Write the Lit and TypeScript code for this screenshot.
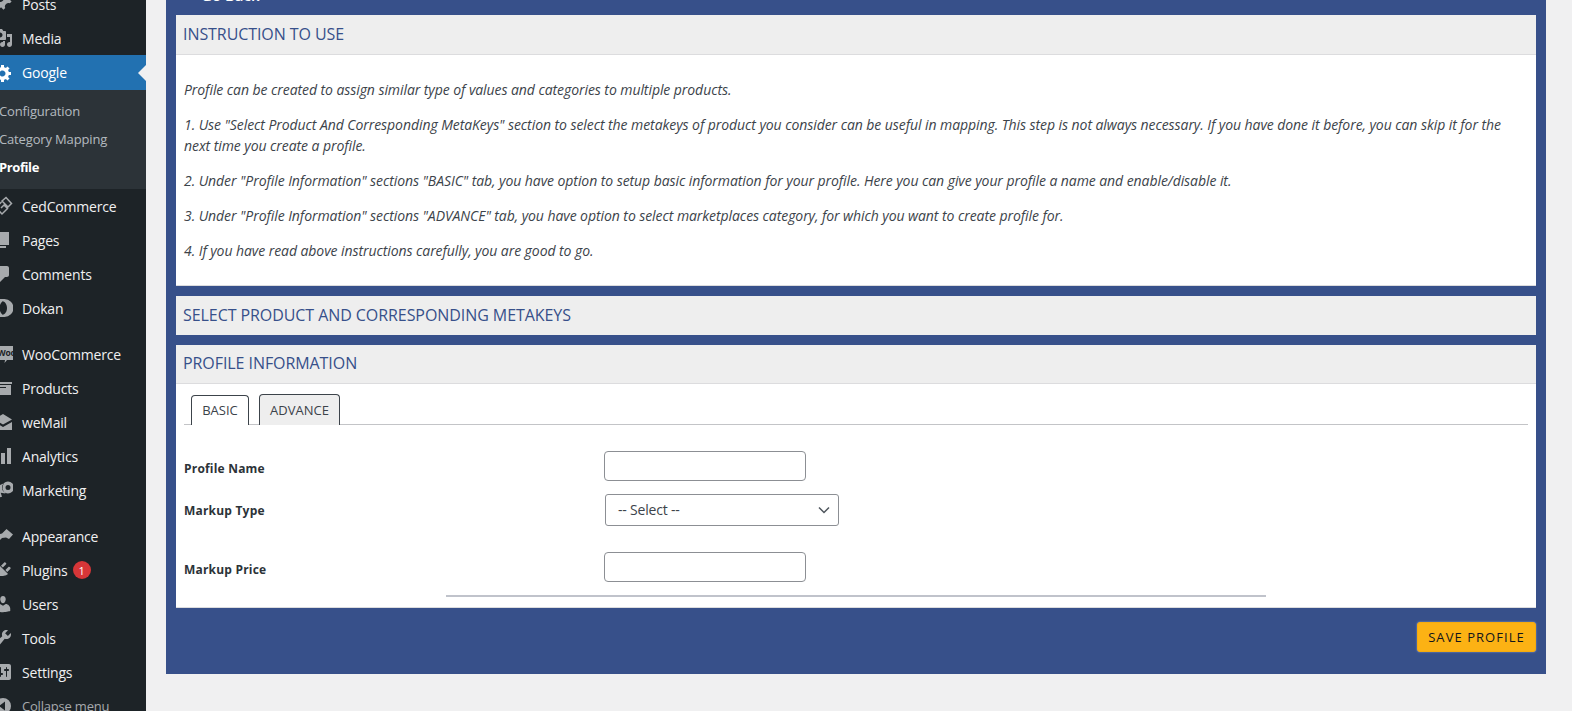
import { LitElement, html, css, svg } from "lit";
import { customElement } from "lit/decorators.js";

const icons: Record<string, any> = {
  posts: svg`<path d="M10.44 3.02l1.82-1.82 6.36 6.35-1.83 1.82c-1.05-.68-2.48-.57-3.41.36l-.75.75c-.92.93-1.04 2.35-.35 3.41l-1.83 1.82-2.41-2.41-2.8 2.79c-.42.42-3.38 2.71-3.8 2.29s1.86-3.39 2.28-3.81l2.79-2.79L4.1 9.36l1.83-1.82c1.05.69 2.48.57 3.4-.36l.75-.75c.93-.92 1.05-2.35.36-3.41z"/>`,
  media: svg`<path d="M13 11V4c0-.55-.45-1-1-1h-1.67L9 1H5L3.67 3H2c-.55 0-1 .45-1 1v7c0 .55.45 1 1 1h10c.55 0 1-.45 1-1zM7 4.5c1.38 0 2.5 1.12 2.5 2.5S8.38 9.5 7 9.5 4.5 8.38 4.5 7 5.62 4.5 7 4.5zM14 6h5v10.5c0 1.38-1.12 2.5-2.5 2.5S14 17.88 14 16.5s1.12-2.5 2.5-2.5c.17 0 .34.02.5.05V9h-3V6zm-4 8.05V13h2v3.5c0 1.38-1.12 2.5-2.5 2.5S7 17.88 7 16.5 8.12 14 9.5 14c.17 0 .34.02.5.05z"/>`,
  gear: svg`<path d="M18 12h-2.18c-.17.7-.44 1.35-.81 1.93l1.54 1.54-2.1 2.1-1.54-1.54c-.58.36-1.23.63-1.91.79V19H8v-2.18c-.68-.16-1.33-.43-1.91-.79l-1.54 1.54-2.12-2.12 1.54-1.54c-.36-.58-.63-1.23-.79-1.91H1V9.03h2.17c.16-.7.44-1.36.8-1.94L2.43 5.55l2.1-2.1 1.54 1.54c.58-.37 1.24-.64 1.93-.81V2h3v2.18c.68.16 1.33.43 1.91.79l1.54-1.54 2.12 2.12-1.54 1.54c.36.59.64 1.24.8 1.94H18V12zm-8.5 1.5c1.66 0 3-1.34 3-3s-1.34-3-3-3-3 1.34-3 3 1.34 3 3 3z"/>`,
  ced: svg`<path fill="none" stroke="currentColor" stroke-width="1.5" d="M13 1.500 18.500 7.500 15 11 9 5zM8.500 6 3 11.500 9 18 14.500 12.500 11 9 8 12"/>`,
  pages: svg`<path d="M6 15V2h10v13H6zm-1 1h8v2H3V5h2v11z"/>`,
  comments: svg`<path d="M5 2h9c1.1 0 2 .9 2 2v7c0 1.1-.9 2-2 2h-2l-5 5v-5H5c-1.100 0-2-.9-2-2V4c0-1.100.9-2 2-2z"/>`,
  dokan: svg`<path d="M3 1h8.500a9 9 0 0 1 0 18H3v-1.600c1 0 1.500-.4 1.500-1.400V4c0-1-.5-1.400-1.500-1.400zM9.500 3.200C7.500 5 6.500 7.500 6.500 10s1 5 3 6.800c3-.6 4.500-3.600 4.500-6.800s-1.500-6.200-4.500-6.800z"/>`,
  woo: svg`<path d="M3 2h17a2 2 0 0 1 2 2v10a2 2 0 0 1-2 2h-6l-2.500 3 .5-3H3a2 2 0 0 1-2-2V4a2 2 0 0 1 2-2z"/><text x="4.500" y="12" font-size="8.500" font-weight="700" fill="#1d2327" font-family="Open Sans, sans-serif">Woo</text>`,
  products: svg`<path d="M19 4v2H1V4h18zM2 7h16v10H2V7zm11 3V9H7v1h6z"/>`,
  wemail: svg`<path d="M10 2l9 5.500-9 5-9-5zM1 10l9 5 9-5v8H1z"/>`,
  analytics: svg`<path d="M18 18V2h-4v16h4zm-6 0V7H8v11h4zm-6 0v-8H2v8h4z"/>`,
  marketing: svg`<path d="M15 1.500a6 6 0 1 1-.1 12 6 6 0 0 1 .1-12zM15 5a2.500 2.500 0 1 0 0 5 2.500 2.500 0 0 0 0-5zM11 3.200 1.500 7.500V11l2.500.8 1.500 6 3.500-1-1.300-4 4.800.8A7.600 7.600 0 0 1 11 3.200z"/>`,
  appearance: svg`<path d="M13.500 3 20 8.500 16 13l-3-1.500-4 .5-4.500 4.500L2 15l3.500-4.500L4 9l5-1.500z"/>`,
  plugins: svg`<path d="M13.11 4.36L9.87 7.6 8 5.73l3.24-3.24c.35-.34 1.05-.2 1.56.32.52.51.66 1.21.31 1.55zm-8 1.77l.91-1.12 9.01 9.01-1.19.84c-.71.71-2.63 1.16-3.82 1.16H6.14L4.9 17.26c-.59.59-1.54.59-2.12 0-.59-.58-.59-1.53 0-2.12l1.24-1.24v-3.88c0-1.13.4-3.19 1.09-3.89zm7.26 3.97l3.24-3.24c.34-.35 1.04-.21 1.55.31.52.51.66 1.21.31 1.55l-3.24 3.25z"/>`,
  users: svg`<path d="M10 9.25c-2.27 0-2.73-3.44-2.73-3.44C7 4.02 7.82 2 9.97 2c2.16 0 2.98 2.02 2.71 3.81 0 0-.41 3.44-2.68 3.44zm0 2.57L12.72 10c2.39 0 4.52 2.33 4.52 4.53v2.49s-3.65 1.13-7.24 1.13c-3.65 0-7.24-1.13-7.24-1.13v-2.49c0-2.25 1.94-4.48 4.15-4.48z"/>`,
  tools: svg`<path d="M16.68 9.77c-1.34 1.34-3.3 1.67-4.95.99l-5.41 6.52c-.99.99-2.59.99-3.57 0-.99-.98-.99-2.58 0-3.57l6.52-5.42c-.68-1.65-.35-3.61.99-4.95 1.28-1.28 3.12-1.62 4.72-1.06l-2.89 2.89 2.82 2.82 2.86-2.87c.53 1.58.18 3.4-1.09 4.67zM3.81 16.21c.4.39 1.04.39 1.43 0 .4-.4.4-1.04 0-1.43-.39-.4-1.03-.4-1.43 0-.39.39-.39 1.03 0 1.43z"/>`,
  settings: svg`<path d="M18 16V4c0-1.100-.9-2-2-2H4c-1.100 0-2 .9-2 2v12c0 1.100.9 2 2 2h12c1.100 0 2-.9 2-2zM8 11h1c.55 0 1 .45 1 1s-.45 1-1 1H8v1.500c0 .28-.22.5-.5.5s-.5-.22-.5-.5V13H6c-.55 0-1-.45-1-1s.45-1 1-1h1V5.500c0-.28.22-.5.5-.5s.5.22.5.5V11zm5-2h-1c-.55 0-1-.45-1-1s.45-1 1-1h1V5.500c0-.28.22-.5.5-.5s.5.22.5.5V7h1c.55 0 1 .45 1 1s-.45 1-1 1h-1v5.500c0 .28-.22.5-.5.5s-.5-.22-.5-.5V9z"/>`,
  collapse: svg`<path d="M10 2a8 8 0 1 1 0 16 8 8 0 0 1 0-16zM12 5.500 6 10l6 4.500z"/>`,
};

type Item = { icon: string; label: string; badge?: string };

const groupA: Item[] = [
  { icon: "posts", label: "Posts" },
  { icon: "media", label: "Media" },
];
const groupB: Item[] = [
  { icon: "ced", label: "CedCommerce" },
  { icon: "pages", label: "Pages" },
  { icon: "comments", label: "Comments" },
  { icon: "dokan", label: "Dokan" },
];
const groupC: Item[] = [
  { icon: "woo", label: "WooCommerce" },
  { icon: "products", label: "Products" },
  { icon: "wemail", label: "weMail" },
  { icon: "analytics", label: "Analytics" },
  { icon: "marketing", label: "Marketing" },
];
const groupD: Item[] = [
  { icon: "appearance", label: "Appearance" },
  { icon: "plugins", label: "Plugins", badge: "1" },
  { icon: "users", label: "Users" },
  { icon: "tools", label: "Tools" },
  { icon: "settings", label: "Settings" },
];

@customElement("app-root")
export class AppRoot extends LitElement {
  static styles = css`
    :host {
      display: flex;
      width: 1572px;
      height: 711px;
      overflow: hidden;
      background: #f0f0f1;
      font-family: "Open Sans", "Noto Sans", sans-serif;
      color: #3c434a;
    }
    .side {
      width: 146px;
      flex: none;
      height: 711px;
      background: #1d2327;
      overflow: hidden;
    }
    .menu { margin-top: -13px; }
    .item {
      height: 34px;
      display: flex;
      align-items: center;
      color: #f0f0f1;
      font-size: 14px;
      letter-spacing: -0.2px;
      position: relative;
    }
    .icon {
      width: 20px;
      height: 20px;
      margin-left: -7px;
      margin-right: 9px;
      fill: #a7aaad;
      color: #a7aaad;
      flex: none;
      fill-rule: evenodd;
    }
    .item.current { background: #2271b1; color: #fff; height: 35px; }
    .item.current .icon { fill: #fff; }
    .item.current::after {
      content: "";
      position: absolute;
      right: 0;
      top: 10px;
      border: 8px solid transparent;
      border-right-color: #f0f0f1;
      border-left-width: 0;
    }
    .sub {
      background: #2c3338;
      padding: 7px 0 8px;
      font-size: 13px;
      letter-spacing: -0.15px;
    }
    .sub div {
      height: 28px;
      line-height: 28px;
      color: rgba(240, 246, 252, 0.7);
      white-space: nowrap;
      margin-left: -1px;
    }
    .sub .on { color: #fff; font-weight: 700; letter-spacing: -0.4px; }
    .gap { height: 12px; }
    .badge {
      width: 18px;
      height: 18px;
      border-radius: 50%;
      background: #d63638;
      color: #fff;
      font-size: 11px;
      display: flex;
      align-items: center;
      justify-content: center;
      margin-left: 5px;
      letter-spacing: 0;
    }
    .collapse { color: #a7aaad; font-size: 13px; }

    .main { flex: 1; padding: 0 26px 0 20px; min-width: 0; }
    .panel {
      background: #37508a;
      margin-top: -30px;
      height: 704px;
      padding: 0 10px;
      box-sizing: border-box;
      display: flex;
      flex-direction: column;
      gap: 10px;
    }
    .goback {
      height: 35px;
      box-sizing: border-box;
      padding: 16px 0 0 25px;
      color: #fff;
      font-size: 15px;
      line-height: 18px;
      font-weight: 600;
    }
    .card { background: #fff; border-bottom: 1px solid #dcdcde; }
    .head {
      height: 39px;
      box-sizing: border-box;
      background: #eee;
      border-bottom: 1px solid #dcdcde;
      padding: 0 0 2px 7px;
      display: flex;
      align-items: center;
      color: #37508a;
      font-size: 16px;
      letter-spacing: -0.07px;
    }
    .head.tall { height: 40px; padding-bottom: 1px; }
    .card.flat .head { border-bottom: 0; }
    .card.flat { border-bottom: 0; }
    .text {
      padding: 24px 8px 0;
      height: 230px;
      box-sizing: border-box;
      font-style: italic;
      font-size: 14px;
      line-height: 21px;
      letter-spacing: -0.07px;
      color: #3c434a;
    }
    .text p { margin: 0 0 14px; }
    .body { height: 223px; padding: 10px 8px 0; box-sizing: border-box; }
    .tabs {
      display: flex;
      gap: 10px;
      padding-left: 7px;
      border-bottom: 1px solid #c3c4c7;
      height: 30px;
      align-items: flex-end;
    }
    .tab {
      box-sizing: border-box;
      border: 1px solid #3c434a;
      border-bottom: 0;
      border-radius: 4px 4px 0 0;
      font-size: 13px;
      letter-spacing: 0;
      display: flex;
      align-items: center;
      justify-content: center;
      padding-bottom: 1px;
    }
    .tab.a { width: 58px; height: 30px; background: #fff; margin-bottom: -1px; }
    .tab.b { width: 81px; height: 31px; background: #eee; margin-bottom: -1px; }
    .row { display: flex; align-items: center; }
    .row label {
      width: 420px;
      flex: none;
      font-size: 12px;
      font-weight: 700;
      color: #2c3338;
      letter-spacing: 0.2px;
    }
    .row .low { padding-top: 4px; }
    .field {
      width: 202px;
      height: 30px;
      box-sizing: border-box;
      border: 1px solid #8c8f94;
      border-radius: 4px;
      background: #fff;
    }
    .select {
      width: 234px;
      height: 32px;
      box-sizing: border-box;
      margin-left: 1px;
      border: 1px solid #8c8f94;
      border-radius: 3px;
      background: #fff;
      display: flex;
      align-items: center;
      justify-content: space-between;
      padding: 0 7px 2px 12px;
      font-size: 14px;
      letter-spacing: -0.2px;
      color: #3c434a;
    }
    .select svg { width: 14px; height: 14px; margin-top: 2px; }
    .r1 { margin-top: 26px; }
    .r2 { margin-top: 13px; }
    .r3 { margin-top: 26px; }
    .rule { width: 820px; height: 2px; background: #c0c3cb; margin: 13px 0 0 262px; }
    .foot { display: flex; justify-content: flex-end; padding-top: 4px; }
    .save {
      width: 119px;
      height: 30px;
      box-sizing: border-box;
      background: #fcb214;
      border: 1px solid #f5ab10;
      border-radius: 3px;
      box-shadow: 0 0 2px #8ea4d2;
      color: #11151c;
      font-size: 13px;
      letter-spacing: 1.05px;
      display: flex;
      align-items: center;
      justify-content: center;
    }
  `;

  private ic(n: string) {
    return html`<svg class="icon" viewBox="0 0 20 20">${icons[n]}</svg>`;
  }
  private rows(list: Item[]) {
    return list.map(
      (i) =>
        html`<div class="item">${this.ic(i.icon)}<span>${i.label}</span>${i.badge
            ? html`<span class="badge">${i.badge}</span>`
            : ""}</div>`
    );
  }

  render() {
    return html`
      <div class="side">
        <div class="menu">
          ${this.rows(groupA)}
          <div class="item current">${this.ic("gear")}<span>Google</span></div>
          <div class="sub">
            <div>Configuration</div>
            <div>Category Mapping</div>
            <div class="on">Profile</div>
          </div>
          ${this.rows(groupB)}
          <div class="gap"></div>
          ${this.rows(groupC)}
          <div class="gap"></div>
          ${this.rows(groupD)}
          <div class="item collapse">${this.ic("collapse")}<span>Collapse menu</span></div>
        </div>
      </div>
      <div class="main">
        <div class="panel">
          <div class="goback">Go Back</div>
          <div class="card">
            <div class="head tall">INSTRUCTION TO USE</div>
            <div class="text">
              <p>Profile can be created to assign similar type of values and categories to multiple products.</p>
              <p>1. Use "Select Product And Corresponding MetaKeys" section to select the metakeys of product you consider can be useful in mapping. This step is not always necessary. If you have done it before, you can skip it for the next time you create a profile.</p>
              <p>2. Under "Profile Information" sections "BASIC" tab, you have option to setup basic information for your profile. Here you can give your profile a name and enable/disable it.</p>
              <p>3. Under "Profile Information" sections "ADVANCE" tab, you have option to select marketplaces category, for which you want to create profile for.</p>
              <p>4. If you have read above instructions carefully, you are good to go.</p>
            </div>
          </div>
          <div class="card flat"><div class="head">SELECT PRODUCT AND CORRESPONDING METAKEYS</div></div>
          <div class="card">
            <div class="head">PROFILE INFORMATION</div>
            <div class="body">
              <div class="tabs">
                <div class="tab a">BASIC</div>
                <div class="tab b">ADVANCE</div>
              </div>
              <div class="row r1"><label class="low">Profile Name</label><div class="field"></div></div>
              <div class="row r2"><label>Markup Type</label>
                <div class="select">-- Select --<svg viewBox="0 0 14 14"><path d="M2 4.500l5 5 5-5" fill="none" stroke="#50575e" stroke-width="1.500"/></svg></div>
              </div>
              <div class="row r3"><label class="low">Markup Price</label><div class="field"></div></div>
              <div class="rule"></div>
            </div>
          </div>
          <div class="foot"><div class="save">SAVE PROFILE</div></div>
        </div>
      </div>
    `;
  }
}
